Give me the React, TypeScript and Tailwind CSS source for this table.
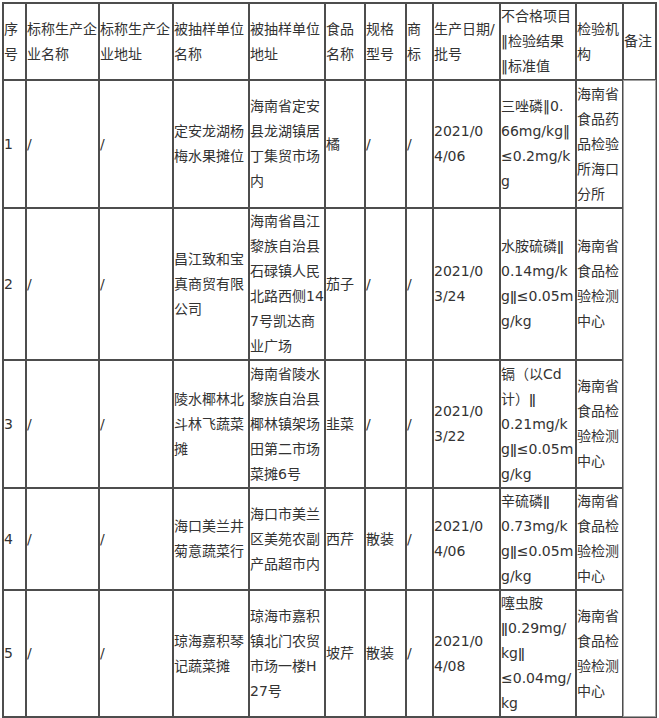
import React from 'react';

type Row = {
    no: string;
    food: string;
    spec: string;
    unit: string[];
    address: string[];
    date: string[];
    result: string[];
    agency: string[];
    height: string;
};

const rows: Row[] = [
    {
        no: '1',
        food: '橘',
        spec: '/',
        unit: ['定安龙湖杨', '梅水果摊位'],
        address: ['海南省定安', '县龙湖镇居', '丁集贸市场', '内'],
        date: ['2021/0', '4/06'],
        result: ['三唑磷‖0.', '66mg/kg‖', '≤0.2mg/k', 'g'],
        agency: ['海南省', '食品药', '品检验', '所海口', '分所'],
        height: 'h-[128px]',
    },
    {
        no: '2',
        food: '茄子',
        spec: '/',
        unit: ['昌江致和宝', '真商贸有限', '公司'],
        address: ['海南省昌江', '黎族自治县', '石碌镇人民', '北路西侧14', '7号凯达商', '业广场'],
        date: ['2021/0', '3/24'],
        result: ['水胺硫磷ǁ', '0.14mg/k', 'gǁ≤0.05m', 'g/kg'],
        agency: ['海南省', '食品检', '验检测', '中心'],
        height: 'h-[150px]',
    },
    {
        no: '3',
        food: '韭菜',
        spec: '/',
        unit: ['陵水椰林北', '斗林飞蔬菜', '摊'],
        address: ['海南省陵水', '黎族自治县', '椰林镇架场', '田第二市场', '菜摊6号'],
        date: ['2021/0', '3/22'],
        result: ['镉（以Cd', '计）ǁ', '0.21mg/k', 'gǁ≤0.05m', 'g/kg'],
        agency: ['海南省', '食品检', '验检测', '中心'],
        height: 'h-[128px]',
    },
    {
        no: '4',
        food: '西芹',
        spec: '散装',
        unit: ['海口美兰井', '菊意蔬菜行'],
        address: ['海口市美兰', '区美苑农副', '产品超市内'],
        date: ['2021/0', '4/06'],
        result: ['辛硫磷ǁ', '0.73mg/k', 'gǁ≤0.05m', 'g/kg'],
        agency: ['海南省', '食品检', '验检测', '中心'],
        height: 'h-[101px]',
    },
    {
        no: '5',
        food: '坡芹',
        spec: '散装',
        unit: ['琼海嘉积琴', '记蔬菜摊'],
        address: ['琼海市嘉积', '镇北门农贸', '市场一楼H', '27号'],
        date: ['2021/0', '4/08'],
        result: ['噻虫胺', 'ǁ0.29mg/', 'kgǁ', '≤0.04mg/', 'kg'],
        agency: ['海南省', '食品检', '验检测', '中心'],
        height: 'h-[126px]',
    },
];

const headers: string[][] = [
    ['序', '号'],
    ['标称生产企', '业名称'],
    ['标称生产企', '业地址'],
    ['被抽样单位', '名称'],
    ['被抽样单位', '地址'],
    ['食品', '名称'],
    ['规格', '型号'],
    ['商', '标'],
    ['生产日期/', '批号'],
    ['不合格项目', '‖检验结果', '‖标准值'],
    ['检验机', '构'],
    ['备注'],
];

const cell = 'border border-[#4d4d4d] p-0 align-middle text-left whitespace-nowrap overflow-hidden';

const Lines = ({ lines }: { lines: string[] }) => (
    <>
        {lines.map((l, i) => (
            <React.Fragment key={i}>
                {i > 0 && <br />}
                {l}
            </React.Fragment>
        ))}
    </>
);

export default function App() {
    return (
        <div
            className="pt-[2px] pl-[2px] bg-white text-[#333] text-[14px] leading-[25px]"
            style={{ fontFamily: '"DejaVu Sans", "Noto Sans CJK SC", sans-serif' }}
        >
            <table className="table-fixed border-separate border-spacing-0 border border-[#4d4d4d] w-[655px]">
                <colgroup>
                    <col className="w-[23px]" />
                    <col className="w-[73px]" />
                    <col className="w-[74px]" />
                    <col className="w-[76px]" />
                    <col className="w-[76px]" />
                    <col className="w-[40px]" />
                    <col className="w-[41px]" />
                    <col className="w-[27px]" />
                    <col className="w-[67px]" />
                    <col className="w-[76px]" />
                    <col className="w-[47px]" />
                    <col className="w-[33px]" />
                </colgroup>
                <tbody>
                    <tr className="h-[76px]">
                        {headers.map((h, i) => (
                            <td key={i} className={cell}>
                                <Lines lines={h} />
                            </td>
                        ))}
                    </tr>
                    {rows.map((r, idx) => (
                        <tr key={r.no} className={r.height}>
                            <td className={cell}>{r.no}</td>
                            <td className={cell}>/</td>
                            <td className={cell}>/</td>
                            <td className={cell}><Lines lines={r.unit} /></td>
                            <td className={cell}><Lines lines={r.address} /></td>
                            <td className={cell}>{r.food}</td>
                            <td className={cell}>{r.spec}</td>
                            <td className={cell}>/</td>
                            <td className={cell}><Lines lines={r.date} /></td>
                            <td className={cell}><Lines lines={r.result} /></td>
                            <td className={cell}><Lines lines={r.agency} /></td>
                            {idx === 0 && (
                                <td rowSpan={5} className="border border-[#a0a0a0] p-0" />
                            )}
                        </tr>
                    ))}
                </tbody>
            </table>
        </div>
    );
}
